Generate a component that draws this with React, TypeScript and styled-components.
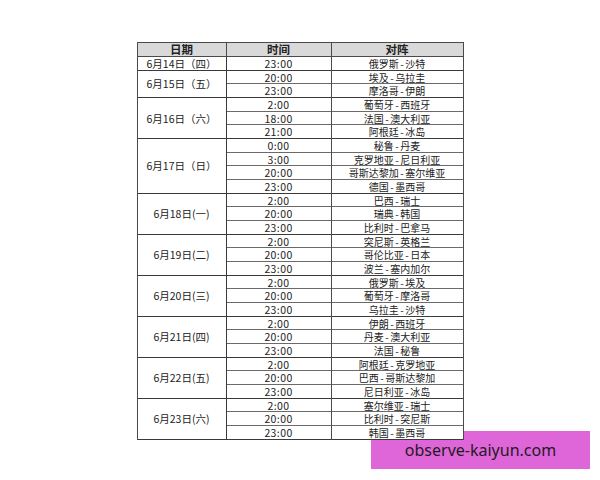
import React from 'react';
import styled, { createGlobalStyle } from 'styled-components';

const GlobalStyle = createGlobalStyle`
  html, body {
    margin: 0;
    padding: 0;
    background: #ffffff;
  }
  body {
    width: 600px;
    height: 480px;
    overflow: hidden;
    font-family: 'Noto Sans CJK SC', 'Noto Sans', sans-serif;
  }
`;

const Page = styled.div`
  position: relative;
  width: 600px;
  height: 480px;
  display: flex;
  justify-content: center;
  padding-top: 42px;
  box-sizing: border-box;
`;

const Schedule = styled.table`
  position: relative; /* sits above the watermark banner */
  z-index: 1;
  width: 327px;
  height: 397px;
  border-collapse: collapse;
  table-layout: fixed;
  background: #fff;
  border: 1.5px solid #3a3a3a;
  color: #222;
  font-size: 10.5px;
`;

const HeadCell = styled.th`
  height: 13px;
  padding: 0;
  background: #d9d9d9;
  border: 1px solid #4a4a4a;
  font-size: 11.5px;
  font-weight: 700;
  line-height: 11px;
  text-align: center;
`;

const Cell = styled.td<{ $groupStart?: boolean }>`
  height: 12.68px;
  padding: 0;
  border-left: 1px solid #4a4a4a;
  border-right: 1px solid #4a4a4a;
  border-top: 1px solid ${({ $groupStart }) => ($groupStart ? '#3a3a3a' : '#6a6a6a')};
  line-height: 11px;
  text-align: center;
  white-space: nowrap;
  overflow: hidden;
`;

const DateCell = styled(Cell)`
  border-right: 1.5px solid #3a3a3a;
`;

const TimeCell = styled(Cell)`
  letter-spacing: 0.4px;
`;

const MatchCell = styled(Cell)`
  font-size: 10px;
`;

const Dash = styled.span`
  margin: 0 1.5px;
`;

const Banner = styled.div`
  position: absolute;
  left: 371px;
  top: 431px;
  width: 219px;
  height: 38px;
  background: #df66d8;
  color: #1e1a1e;
  display: flex;
  align-items: center;
  justify-content: center;
  font-family: 'Noto Sans', 'Liberation Sans', sans-serif;
  font-size: 16px;
`;

type Day = { date: string; games: [string, string][] };

const days: Day[] = [
  { date: '6月14日（四）', games: [['23:00', '俄罗斯-沙特']] },
  { date: '6月15日（五）', games: [['20:00', '埃及-乌拉圭'], ['23:00', '摩洛哥-伊朗']] },
  {
    date: '6月16日（六）',
    games: [['2:00', '葡萄牙-西班牙'], ['18:00', '法国-澳大利亚'], ['21:00', '阿根廷-冰岛']],
  },
  {
    date: '6月17日（日）',
    games: [
      ['0:00', '秘鲁-丹麦'],
      ['3:00', '克罗地亚-尼日利亚'],
      ['20:00', '哥斯达黎加-塞尔维亚'],
      ['23:00', '德国-墨西哥'],
    ],
  },
  { date: '6月18日(一)', games: [['2:00', '巴西-瑞士'], ['20:00', '瑞典-韩国'], ['23:00', '比利时-巴拿马']] },
  { date: '6月19日(二)', games: [['2:00', '突尼斯-英格兰'], ['20:00', '哥伦比亚-日本'], ['23:00', '波兰-塞内加尔']] },
  { date: '6月20日(三)', games: [['2:00', '俄罗斯-埃及'], ['20:00', '葡萄牙-摩洛哥'], ['23:00', '乌拉圭-沙特']] },
  { date: '6月21日(四)', games: [['2:00', '伊朗-西班牙'], ['20:00', '丹麦-澳大利亚'], ['23:00', '法国-秘鲁']] },
  { date: '6月22日(五)', games: [['2:00', '阿根廷-克罗地亚'], ['20:00', '巴西-哥斯达黎加'], ['23:00', '尼日利亚-冰岛']] },
  { date: '6月23日(六)', games: [['2:00', '塞尔维亚-瑞士'], ['20:00', '比利时-突尼斯'], ['23:00', '韩国-墨西哥']] },
];

const renderMatch = (match: string) => {
  const [home, away] = match.split('-');
  return (
    <>
      {home}
      <Dash>-</Dash>
      {away}
    </>
  );
};

export default function App() {
  return (
    <Page>
      <GlobalStyle />
      <Schedule>
        <colgroup>
          <col style={{ width: 89 }} />
          <col style={{ width: 105 }} />
          <col />
        </colgroup>
        <thead>
          <tr>
            <HeadCell>日期</HeadCell>
            <HeadCell>时间</HeadCell>
            <HeadCell>对阵</HeadCell>
          </tr>
        </thead>
        <tbody>
          {days.map((day) =>
            day.games.map(([time, match], i) => (
              <tr key={day.date + time}>
                {i === 0 && (
                  <DateCell $groupStart rowSpan={day.games.length}>
                    {day.date}
                  </DateCell>
                )}
                <TimeCell $groupStart={i === 0}>{time}</TimeCell>
                <MatchCell $groupStart={i === 0}>{renderMatch(match)}</MatchCell>
              </tr>
            ))
          )}
        </tbody>
      </Schedule>
      <Banner>observe-kaiyun.com</Banner>
    </Page>
  );
}
